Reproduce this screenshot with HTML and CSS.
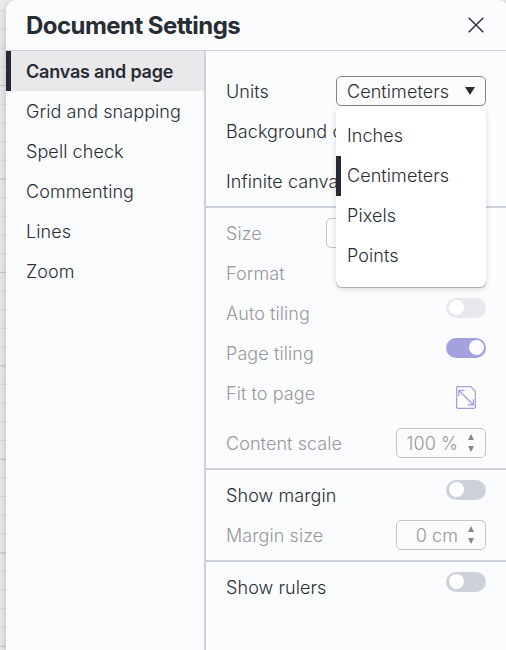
FILE: index.html
```html
<!DOCTYPE html>
<html lang="en">
<head>
    <meta charset="UTF-8">
    <meta name="viewport" content="width=device-width, initial-scale=1.0">
    <title>Document Settings</title>
    <link rel="stylesheet" href="styles.css">
</head>
<body>
    <div class="dialog">
        <header class="dialog-header">
            <h1>Document Settings</h1>
            <svg class="close" width="16" height="16" viewBox="0 0 16 16">
                <path d="M0.7 0.7L15.3 15.3M15.3 0.7L0.7 15.3" fill="none" stroke="#282c33" stroke-width="1.4"/>
            </svg>
        </header>

        <div class="dialog-body">
            <nav class="tabs">
                <div class="tab active">Canvas and page</div>
                <div class="tab">Grid and snapping</div>
                <div class="tab">Spell check</div>
                <div class="tab">Commenting</div>
                <div class="tab">Lines</div>
                <div class="tab">Zoom</div>
            </nav>

            <main class="settings">
                <section class="group first">
                    <div class="row">
                        <label>Units</label>
                        <div class="select open">
                            <span>Centimeters</span>
                            <svg width="10" height="8" viewBox="0 0 10 8"><path d="M0 0H10L5 8Z" fill="#282c33"/></svg>
                            <div class="menu">
                                <div class="option">Inches</div>
                                <div class="option selected">Centimeters</div>
                                <div class="option">Pixels</div>
                                <div class="option">Points</div>
                            </div>
                        </div>
                    </div>
                    <div class="row"><label>Background color</label></div>
                    <div class="row spaced"><label>Infinite canvas</label></div>
                </section>

                <section class="group">
                    <div class="row disabled">
                        <label>Size</label>
                        <div class="select size"></div>
                    </div>
                    <div class="row disabled">
                        <label>Format</label>
                        <div class="select"></div>
                    </div>
                    <div class="row disabled">
                        <label>Auto tiling</label>
                        <div class="toggle"></div>
                    </div>
                    <div class="row disabled">
                        <label>Page tiling</label>
                        <div class="toggle on"></div>
                    </div>
                    <div class="row disabled">
                        <label>Fit to page</label>
                        <svg class="fit" width="20" height="23" viewBox="0 0 20 23" fill="none" stroke="#a3a1de" stroke-width="1.3">
                            <path d="M2 0.6H14.7L19.4 5.3V21Q19.4 22.3 18 22.3H2Q0.6 22.3 0.6 21V2Q0.6 0.6 2 0.6Z"/>
                            <path d="M3 4.5L17.2 18.7M2.8 10V4.3H8.6M11.6 18.9H17.4V13.2"/>
                        </svg>
                    </div>
                    <div class="row spaced disabled">
                        <label>Content scale</label>
                        <div class="spinner">
                            <span>100 %</span>
                            <svg width="6" height="18" viewBox="0 0 6 18" fill="#85878a"><path d="M3 0L6 6H0ZM0 12H6L3 18Z"/></svg>
                        </div>
                    </div>
                </section>

                <section class="group">
                    <div class="row">
                        <label>Show margin</label>
                        <div class="toggle"></div>
                    </div>
                    <div class="row disabled">
                        <label>Margin size</label>
                        <div class="spinner">
                            <span>0 cm</span>
                            <svg width="6" height="18" viewBox="0 0 6 18" fill="#85878a"><path d="M3 0L6 6H0ZM0 12H6L3 18Z"/></svg>
                        </div>
                    </div>
                </section>

                <section class="group">
                    <div class="row">
                        <label>Show rulers</label>
                        <div class="toggle"></div>
                    </div>
                </section>
            </main>
        </div>
    </div>
</body>
</html>
```

FILE: styles.css
```css
* {
    box-sizing: border-box;
}
body {
    margin: 0;
    height: 650px;
    padding-left: 6px;
    overflow: hidden;
    font-family: Inter, "Liberation Sans", sans-serif;
    font-size: 18px;
    font-weight: 300;
    letter-spacing: 0.08px;
    color: #282c33;
    background-color: #f0f0f0;
    background-image:
        linear-gradient(#cfcfcf 1px, transparent 1px),
        linear-gradient(#dedede 1px, transparent 1px);
    background-size: 100% 93.5px, 100% 18.7px;
    background-position: 0 85px, 0 10.2px;
}
.dialog {
    width: 502px;
    height: 670px;
    display: flex;
    flex-direction: column;
    background-color: #fbfcfe;
    border-radius: 10px;
    box-shadow: 0 2px 12px rgba(0, 0, 0, 0.25);
    overflow: hidden;
}
.dialog-header {
    height: 51px;
    flex: none;
    display: flex;
    align-items: center;
    justify-content: space-between;
    padding: 0 24px 0 20px;
    border-bottom: 1px solid #cdced2;
}
h1 {
    margin: 2px 0 0;
    font-size: 24px;
    line-height: 30px;
    font-weight: 650;
    letter-spacing: -0.55px;
}
.dialog-body {
    flex: 1;
    display: flex;
}
.tabs {
    width: 200px;
    flex: none;
    border-right: 2px solid #cdd1db;
}
.tab {
    height: 40px;
    display: flex;
    align-items: center;
    padding: 1px 0 0 20px;
}
.tab.active {
    padding-left: 15px;
    border-left: 5px solid #242933;
    background-color: #e9e8eb;
    font-weight: 600;
    letter-spacing: -0.2px;
}
.settings {
    flex: 1;
}
.group {
    padding: 5px 22px 5px 20px;
    border-bottom: 2px solid #cdd1db;
}
.group.first {
    padding-top: 20px;
}
.group:last-child {
    border-bottom: none;
}
.row {
    height: 40px;
    display: flex;
    align-items: center;
    justify-content: space-between;
}
.row label {
    white-space: nowrap;
}
.row.spaced {
    margin-top: 10px;
}
.row.disabled label,
.disabled .spinner {
    color: #96989b;
}
.select {
    position: relative;
    width: 150px;
    height: 30px;
    display: flex;
    align-items: center;
    justify-content: space-between;
    padding: 0 10px;
    border: 1px solid #84868b;
    border-radius: 5px;
    background-color: #fcfcfc;
}
.disabled .select {
    border-color: #c4c5c8;
}
.select.size {
    width: 160px;
}
.menu {
    position: absolute;
    z-index: 2;
    top: 30px;
    left: -1px;
    width: 150px;
    height: 180px;
    padding-top: 9px;
    border-radius: 7px;
    background-color: #fff;
    box-shadow: 0 2px 6px rgba(0, 0, 0, 0.15);
}
.option {
    height: 40px;
    display: flex;
    align-items: center;
    padding: 0 0 1px 11px;
}
.option.selected {
    padding-left: 6px;
    border-left: 5px solid #242933;
}
.toggle {
    width: 40px;
    height: 20px;
    margin-bottom: 11px;
    padding: 2.5px 3px;
    border-radius: 10px;
    background-color: #cdd1db;
    display: flex;
}
.toggle::after {
    content: "";
    width: 15px;
    height: 15px;
    border-radius: 50%;
    background-color: #fff;
}
.toggle.on {
    justify-content: flex-end;
    padding-right: 2px;
}
.disabled .toggle {
    background-color: #e7e9ec;
}
.disabled .toggle.on {
    background-color: #a3a1de;
}
.fit {
    margin: 9px 10px 0 0;
}
.spinner {
    width: 90px;
    height: 30px;
    display: flex;
    align-items: center;
    justify-content: flex-end;
    gap: 10px;
    padding-right: 11px;
    border: 1px solid #c4c5c8;
    border-radius: 5px;
    background-color: #fcfcfc;
}
```
